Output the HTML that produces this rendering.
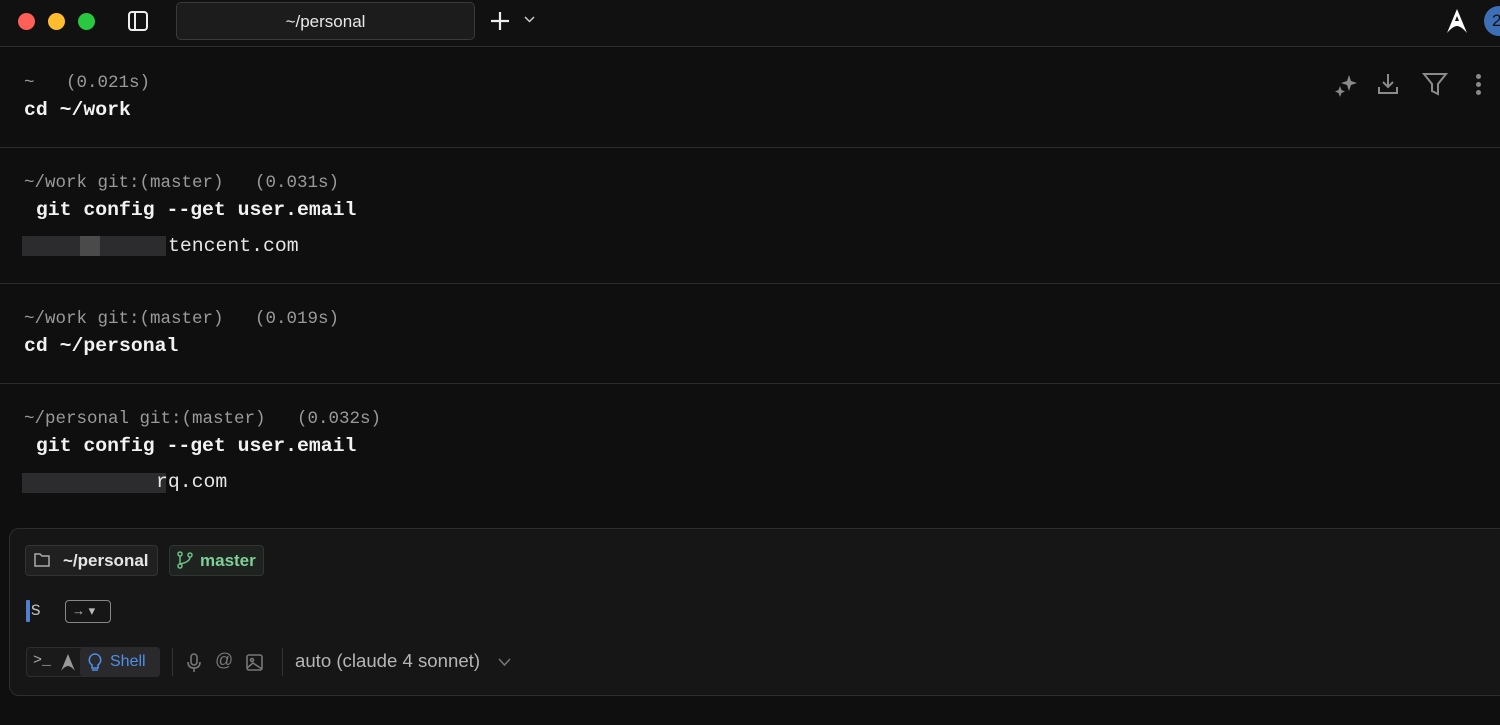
<!DOCTYPE html>
<html><head><meta charset="utf-8"><style>
*{margin:0;padding:0;box-sizing:border-box}
body{width:1500px;height:725px;overflow:hidden;background:#0f0f10;font-family:"Liberation Sans",sans-serif;position:relative;color:#fff}
.mono{font-family:"Liberation Mono",monospace;font-size:19.8px;position:absolute;left:24px;white-space:pre}
.g{color:#9a9a9a;font-size:17.5px;margin-top:1px}
.b{font-weight:bold;color:#f2f2f2}
.t{color:#e6e6e6}
.sep{position:absolute;left:0;width:1500px;height:1px;background:#2c2c2c}
.ab{position:absolute}
</style></head><body>
<div class="ab" style="left:0;top:0;width:1500px;height:46px;background:#111112"></div>
<div class="sep" style="top:46px;background:#2e2e2e"></div>
<div class="ab" style="left:18px;top:13px;width:17px;height:17px;border-radius:50%;background:#fe5f57"></div>
<div class="ab" style="left:48px;top:13px;width:17px;height:17px;border-radius:50%;background:#febc2e"></div>
<div class="ab" style="left:78px;top:13px;width:17px;height:17px;border-radius:50%;background:#28c840"></div>
<svg class="ab" style="left:127px;top:10px" width="22" height="22" viewBox="0 0 22 22"><rect x="2" y="2" width="18" height="18" rx="3" fill="none" stroke="#eee" stroke-width="2"/><line x1="8" y1="2" x2="8" y2="20" stroke="#eee" stroke-width="2"/></svg>
<div class="ab" style="left:176px;top:2px;width:299px;height:38px;border:1px solid #3a3a3a;border-radius:5px;background:#1c1c1d;color:#e8e8e8;font-size:17px;text-align:center;line-height:37px">~/personal</div>
<svg class="ab" style="left:489px;top:10px" width="22" height="22"><path d="M11 2V20M2 11H20" stroke="#eee" stroke-width="2.2"/></svg>
<svg class="ab" style="left:524px;top:16px" width="11" height="8"><path d="M1 1L5.5 5.5L10 1" stroke="#ccc" stroke-width="1.5" fill="none"/></svg>
<svg class="ab" style="left:1446px;top:8px" width="22" height="26" viewBox="0 0 22 26"><path d="M11 1L21 25Q15 18 11 18Q7 18 1 25Z" fill="#fff"/><path d="M11 8L13 13H9Z" fill="#111"/></svg>
<div class="ab" style="left:1484px;top:6px;width:30px;height:30px;border-radius:50%;background:#3d6fb6;color:#111;font-size:17px;line-height:30px;padding-left:8px">2</div>
<svg class="ab" style="left:1334px;top:73px" width="24" height="24" viewBox="0 0 24 24"><path d="M15 2L17 8L23 10L17 12L15 18L13 12L7 10L13 8Z" fill="#8a8a8a"/><path d="M6 13L7.5 17L11 18.5L7.5 20L6 24L4.5 20L1 18.5L4.5 17Z" fill="#8a8a8a"/></svg>
<svg class="ab" style="left:1376px;top:72px" width="24" height="24" viewBox="0 0 24 24" fill="none" stroke="#8a8a8a" stroke-width="2"><path d="M12 2V15M7 10L12 15L17 10M3 15V21H21V15"/></svg>
<svg class="ab" style="left:1422px;top:72px" width="26" height="24" viewBox="0 0 26 24" fill="none" stroke="#8a8a8a" stroke-width="2"><path d="M2 2H24L16 12V22L10 19V12Z"/></svg>
<div class="ab" style="left:1476px;top:74px;width:5px;height:5px;border-radius:50%;background:#8a8a8a;box-shadow:0 8px 0 #8a8a8a,0 16px 0 #8a8a8a"></div>
<div class="mono g" style="top:72px">~   (0.021s)</div>
<div class="mono b" style="top:99px">cd ~/work</div>
<div class="sep" style="top:147px"></div>
<div class="mono g" style="top:172px">~/work git:(master)   (0.031s)</div>
<div class="mono b" style="top:199px"> git config --get user.email</div>
<div class="ab" style="left:22px;top:236px;width:144px;height:20px;background:#2c2c2e"></div>
<div class="ab" style="left:80px;top:236px;width:20px;height:20px;background:#4a4a4a"></div>
<div class="mono t" style="top:235px;left:168px">tencent.com</div>
<div class="sep" style="top:283px"></div>
<div class="mono g" style="top:308px">~/work git:(master)   (0.019s)</div>
<div class="mono b" style="top:335px">cd ~/personal</div>
<div class="sep" style="top:383px"></div>
<div class="mono g" style="top:408px">~/personal git:(master)   (0.032s)</div>
<div class="mono b" style="top:435px"> git config --get user.email</div>
<div class="ab" style="left:22px;top:473px;width:144px;height:20px;background:#2c2c2e"></div>
<div class="mono t" style="top:471px;left:156px">rq.com</div>
<div class="ab" style="left:9px;top:528px;width:1500px;height:168px;border:1px solid #2e2e2e;border-radius:10px;background:#161617"></div>
<div class="ab" style="left:25px;top:545px;width:133px;height:31px;border:1px solid #333;border-radius:4px;background:#202021;color:#e6e6e6;font-size:17px;line-height:29px;padding-left:37px;font-weight:bold">~/personal</div>
<svg class="ab" style="left:33px;top:551px" width="18" height="18" viewBox="0 0 18 18" fill="none" stroke="#aaa" stroke-width="1.5"><path d="M2 3H7L9 5H16V15H2Z"/></svg>
<div class="ab" style="left:169px;top:545px;width:95px;height:31px;border:1px solid #333;border-radius:4px;background:#1f2320;color:#7fcf98;font-size:17px;line-height:29px;padding-left:30px;font-weight:bold">master</div>
<svg class="ab" style="left:176px;top:551px" width="18" height="18" viewBox="0 0 18 18" fill="none" stroke="#6fbf88" stroke-width="1.5"><circle cx="4" cy="3" r="2"/><circle cx="4" cy="15" r="2"/><circle cx="14" cy="4" r="2"/><path d="M4 5V13M14 6Q14 11 4 13"/></svg>
<div class="ab" style="left:26px;top:600px;width:4px;height:22px;background:#4f7fd1;border-radius:1px"></div>
<div class="ab" style="left:30px;top:599px;color:#bbb;font-size:19px;font-family:'Liberation Mono',monospace">s</div>
<div class="ab" style="left:65px;top:600px;width:46px;height:23px;border:1.5px solid #888;border-radius:4px;color:#bbb;font-size:13px;line-height:20px;padding-left:6px">→ ▾</div>
<div class="ab" style="left:26px;top:647px;width:134px;height:30px;border:1px solid #2e2e2e;border-radius:4px;background:#1a1a1b"></div>
<div class="ab" style="left:33px;top:652px;color:#aaa;font-size:15px;font-family:'Liberation Mono',monospace">&gt;_</div>
<svg class="ab" style="left:60px;top:653px" width="16" height="19" viewBox="0 0 16 19"><path d="M8 1L15 18Q11 13 8 13Q5 13 1 18Z" fill="#999"/></svg>
<div class="ab" style="left:80px;top:647px;width:80px;height:30px;border-radius:4px;background:#2a2a2c;color:#4f8fe8;font-size:16px;line-height:30px;padding-left:30px">Shell</div>
<svg class="ab" style="left:87px;top:653px" width="16" height="19" viewBox="0 0 16 19" fill="none" stroke="#4f8fe8" stroke-width="1.6"><path d="M8 1A6 6 0 0 1 11 12V15H5V12A6 6 0 0 1 8 1ZM5 17H11"/></svg>
<div class="ab" style="left:172px;top:648px;width:1px;height:28px;background:#333"></div>
<svg class="ab" style="left:186px;top:653px" width="16" height="20" viewBox="0 0 16 20" fill="none" stroke="#777" stroke-width="1.6"><rect x="5" y="1" width="6" height="11" rx="3"/><path d="M2 9Q2 15 8 15Q14 15 14 9M8 15V19"/></svg>
<div class="ab" style="left:215px;top:650px;color:#777;font-size:18px">@</div>
<svg class="ab" style="left:246px;top:654px" width="17" height="17" viewBox="0 0 17 17" fill="none" stroke="#777" stroke-width="1.6"><rect x="1" y="1" width="15" height="15" rx="2"/><circle cx="6" cy="6" r="1.5"/><path d="M1 14L7 9L16 15"/></svg>
<div class="ab" style="left:282px;top:648px;width:1px;height:28px;background:#333"></div>
<div class="ab" style="left:295px;top:650px;color:#b5b5b5;font-size:18.6px">auto (claude 4 sonnet)</div>
<svg class="ab" style="left:498px;top:658px" width="13" height="9"><path d="M1 1L6.5 7L12 1" stroke="#777" stroke-width="1.5" fill="none"/></svg>
</body></html>
